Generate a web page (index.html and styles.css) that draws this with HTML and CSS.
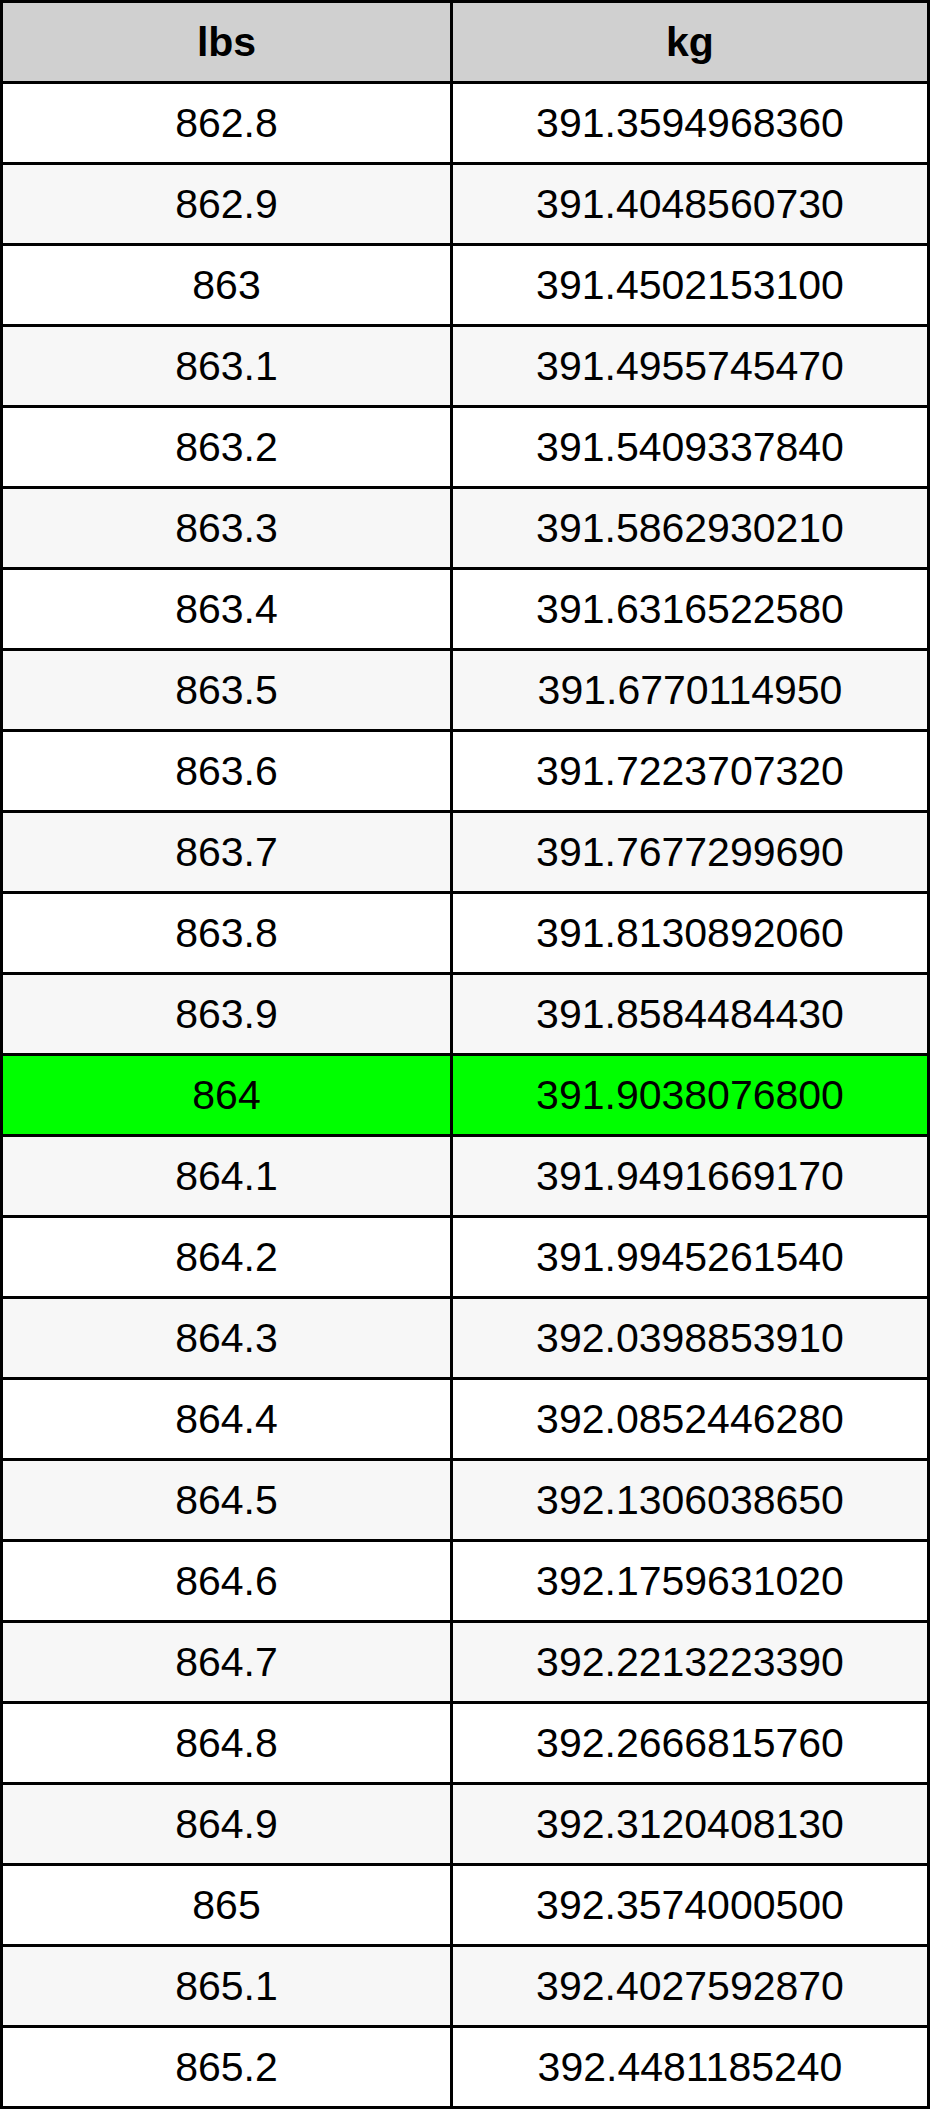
FILE: index.html
```html
<!DOCTYPE html>
<html>
<head>
<meta charset="utf-8">
<link rel="stylesheet" href="styles.css">
</head>
<body>
<table class="conv">
<colgroup><col class="c-lbs"><col class="c-kg"></colgroup>
<thead>
<tr><th>lbs</th><th>kg</th></tr>
</thead>
<tbody>
<tr><td>862.8</td><td>391.3594968360</td></tr>
<tr><td>862.9</td><td>391.4048560730</td></tr>
<tr><td>863</td><td>391.4502153100</td></tr>
<tr><td>863.1</td><td>391.4955745470</td></tr>
<tr><td>863.2</td><td>391.5409337840</td></tr>
<tr><td>863.3</td><td>391.5862930210</td></tr>
<tr><td>863.4</td><td>391.6316522580</td></tr>
<tr><td>863.5</td><td>391.6770114950</td></tr>
<tr><td>863.6</td><td>391.7223707320</td></tr>
<tr><td>863.7</td><td>391.7677299690</td></tr>
<tr><td>863.8</td><td>391.8130892060</td></tr>
<tr><td>863.9</td><td>391.8584484430</td></tr>
<tr class="hl"><td>864</td><td>391.9038076800</td></tr>
<tr><td>864.1</td><td>391.9491669170</td></tr>
<tr><td>864.2</td><td>391.9945261540</td></tr>
<tr><td>864.3</td><td>392.0398853910</td></tr>
<tr><td>864.4</td><td>392.0852446280</td></tr>
<tr><td>864.5</td><td>392.1306038650</td></tr>
<tr><td>864.6</td><td>392.1759631020</td></tr>
<tr><td>864.7</td><td>392.2213223390</td></tr>
<tr><td>864.8</td><td>392.2666815760</td></tr>
<tr><td>864.9</td><td>392.3120408130</td></tr>
<tr><td>865</td><td>392.3574000500</td></tr>
<tr><td>865.1</td><td>392.4027592870</td></tr>
<tr><td>865.2</td><td>392.4481185240</td></tr>
</tbody>
</table>
</body>
</html>
```

FILE: styles.css
```css
html, body {
  margin: 0;
  padding: 0;
  background: #ffffff;
}

.conv {
  width: 930px;
  border-collapse: separate;
  border-spacing: 3px;
  background: #000000;
  table-layout: fixed;
  font-family: "Liberation Sans", Arial, sans-serif;
  font-size: 41px;
  color: #000000;
}

.c-lbs { width: 447px; }
.c-kg { width: 474px; }

.conv th,
.conv td {
  height: 78px;
  padding: 0;
  text-align: center;
  vertical-align: middle;
  line-height: 1;
  background: #ffffff;
}

.conv th {
  background: #d0d0d0;
  font-weight: bold;
}

.conv tbody tr:nth-child(even) td {
  background: #f7f7f7;
}

.conv tbody tr.hl td {
  background: #00ff00;
}
```
